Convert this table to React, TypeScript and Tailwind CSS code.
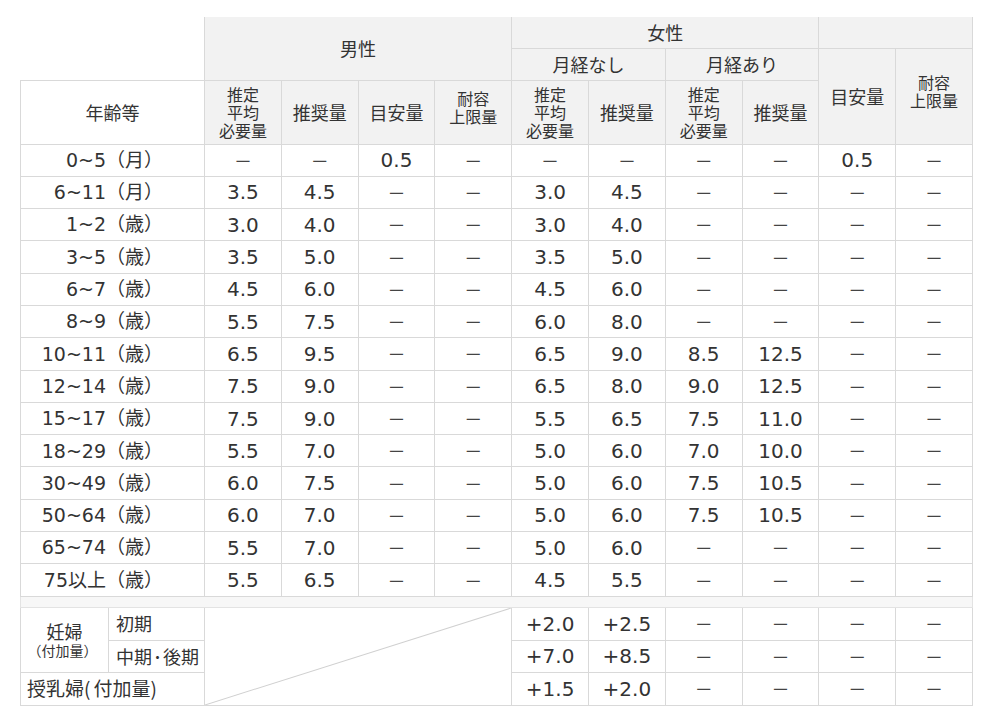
const dash = '－'

type Row = { age: string; m: string[]; f: string[] }

const rows: Row[] = [
  { age: '0~5（月）', m: [dash, dash, '0.5', dash], f: [dash, dash, dash, dash, '0.5', dash] },
  { age: '6~11（月）', m: ['3.5', '4.5', dash, dash], f: ['3.0', '4.5', dash, dash, dash, dash] },
  { age: '1~2（歳）', m: ['3.0', '4.0', dash, dash], f: ['3.0', '4.0', dash, dash, dash, dash] },
  { age: '3~5（歳）', m: ['3.5', '5.0', dash, dash], f: ['3.5', '5.0', dash, dash, dash, dash] },
  { age: '6~7（歳）', m: ['4.5', '6.0', dash, dash], f: ['4.5', '6.0', dash, dash, dash, dash] },
  { age: '8~9（歳）', m: ['5.5', '7.5', dash, dash], f: ['6.0', '8.0', dash, dash, dash, dash] },
  { age: '10~11（歳）', m: ['6.5', '9.5', dash, dash], f: ['6.5', '9.0', '8.5', '12.5', dash, dash] },
  { age: '12~14（歳）', m: ['7.5', '9.0', dash, dash], f: ['6.5', '8.0', '9.0', '12.5', dash, dash] },
  { age: '15~17（歳）', m: ['7.5', '9.0', dash, dash], f: ['5.5', '6.5', '7.5', '11.0', dash, dash] },
  { age: '18~29（歳）', m: ['5.5', '7.0', dash, dash], f: ['5.0', '6.0', '7.0', '10.0', dash, dash] },
  { age: '30~49（歳）', m: ['6.0', '7.5', dash, dash], f: ['5.0', '6.0', '7.5', '10.5', dash, dash] },
  { age: '50~64（歳）', m: ['6.0', '7.0', dash, dash], f: ['5.0', '6.0', '7.5', '10.5', dash, dash] },
  { age: '65~74（歳）', m: ['5.5', '7.0', dash, dash], f: ['5.0', '6.0', dash, dash, dash, dash] },
  { age: '75以上（歳）', m: ['5.5', '6.5', dash, dash], f: ['4.5', '5.5', dash, dash, dash, dash] },
]

const pregnant = [
  ['+2.0', '+2.5', dash, dash, dash, dash],
  ['+7.0', '+8.5', dash, dash, dash, dash],
  ['+1.5', '+2.0', dash, dash, dash, dash],
]

const cell = 'border border-[#d9d9d9] text-center align-middle p-0'
const head = `${cell} bg-[#f2f2f2] text-[18px] leading-[20px]`
const small = `${cell} bg-[#f2f2f2] text-[16px] leading-[18px]`

// digits look Verdana-ish in the source, DejaVu Sans is the closest we have
const latin = { fontFamily: '"DejaVu Sans", "Noto Sans CJK JP", sans-serif' }

function Value({ v }: { v: string }) {
  const isDash = v === dash
  return (
    <td
      className={`${cell} ${isDash ? 'text-[18px] text-[#444]' : 'text-[20px]'}`}
      style={isDash ? undefined : latin}
    >
      {v}
    </td>
  )
}

function ThreeLine() {
  return (
    <th className={`${small} font-normal`}>
      推定
      <br />
      平均
      <br />
      必要量
    </th>
  )
}

export default function App() {
  return (
    <div
      className="w-[1000px] h-[713px] bg-white pt-[17px] pl-[20px] text-[#333]"
      style={{ fontFamily: '"Noto Sans CJK JP", "Noto Sans", sans-serif' }}
    >
      <table className="border-collapse table-fixed w-[952px]">
        <colgroup>
          <col className="w-[88px]" />
          <col className="w-[96px]" />
          {Array.from({ length: 10 }).map((_, i) => (
            <col key={i} className="w-[76.8px]" />
          ))}
        </colgroup>
        <thead>
          <tr className="h-[31px]">
            <th colSpan={2} rowSpan={2} className="border-0 bg-white" />
            <th colSpan={4} rowSpan={2} className={`${head} font-normal border-t-0`}>
              男性
            </th>
            <th colSpan={4} className={`${head} font-normal border-t-0`}>
              女性
            </th>
            <th colSpan={2} className={`${head} border-t-0`} />
          </tr>
          <tr className="h-[32px]">
            <th colSpan={2} className={`${head} font-normal`}>
              月経なし
            </th>
            <th colSpan={2} className={`${head} font-normal`}>
              月経あり
            </th>
            <th rowSpan={2} className={`${head} font-normal`}>
              目安量
            </th>
            <th rowSpan={2} className={`${small} font-normal pb-[10px]`}>
              耐容
              <br />
              上限量
            </th>
          </tr>
          <tr className="h-[64px]">
            <th colSpan={2} className={`${cell} bg-white font-normal text-[18px]`}>
              年齢等
            </th>
            <ThreeLine />
            <th className={`${head} font-normal`}>推奨量</th>
            <th className={`${head} font-normal`}>目安量</th>
            <th className={`${small} font-normal pb-[10px]`}>
              耐容
              <br />
              上限量
            </th>
            <ThreeLine />
            <th className={`${head} font-normal`}>推奨量</th>
            <ThreeLine />
            <th className={`${head} font-normal`}>推奨量</th>
          </tr>
        </thead>
        <tbody>
          {rows.map((r) => (
            <tr key={r.age} className="h-[32.3px]">
              <td
                colSpan={2}
                className={`${cell} text-right pr-[41px] text-[19px] whitespace-nowrap`}
                style={latin}
              >
                {r.age}
              </td>
              {r.m.map((v, i) => (
                <Value key={'m' + i} v={v} />
              ))}
              {r.f.map((v, i) => (
                <Value key={'f' + i} v={v} />
              ))}
            </tr>
          ))}
          <tr className="h-[11px]">
            <td colSpan={12} className="border border-[#e3e3e3] bg-[#f7f7f7] p-0" />
          </tr>
          <tr className="h-[33px]">
            <td rowSpan={2} className={`${cell} text-[18px] leading-[20px]`}>
              妊婦
              <div className="text-[14px] leading-[18px] -ml-[4px]">（付加量）</div>
            </td>
            <td className={`${cell} text-left pl-[7px] text-[18px]`}>初期</td>
            <td colSpan={4} rowSpan={3} className={`${cell} relative`}>
              <svg
                className="absolute inset-0 w-full h-full"
                viewBox="0 0 100 100"
                preserveAspectRatio="none"
              >
                <line
                  x1="0"
                  y1="100"
                  x2="100"
                  y2="0"
                  stroke="#d0d0d0"
                  strokeWidth="1"
                  vectorEffect="non-scaling-stroke"
                />
              </svg>
            </td>
            {pregnant[0].map((v, i) => (
              <Value key={i} v={v} />
            ))}
          </tr>
          <tr className="h-[32px]">
            <td className={`${cell} text-left pl-[7px] text-[18px] whitespace-nowrap`}>
              中期<span className="mx-[1px]">･</span>後期
            </td>
            {pregnant[1].map((v, i) => (
              <Value key={i} v={v} />
            ))}
          </tr>
          <tr className="h-[33px]">
            <td colSpan={2} className={`${cell} text-left pl-[6px] text-[19px] whitespace-nowrap`}>
              授乳婦<span className="mr-[3px]">(</span>付加量<span>)</span>
            </td>
            {pregnant[2].map((v, i) => (
              <Value key={i} v={v} />
            ))}
          </tr>
        </tbody>
      </table>
    </div>
  )
}
